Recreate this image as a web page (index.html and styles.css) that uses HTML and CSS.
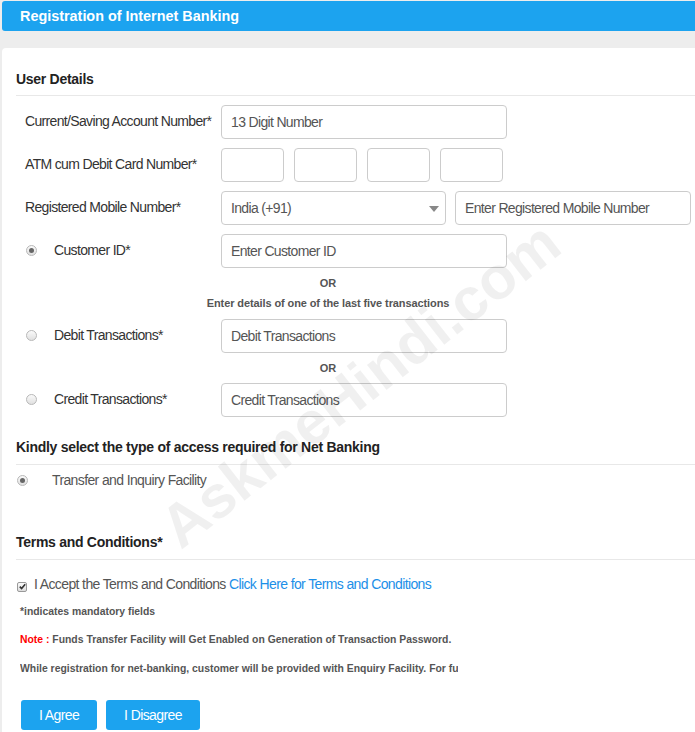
FILE: index.html
```html
<!DOCTYPE html>
<html>
<head>
<meta charset="utf-8">
<title>Registration of Internet Banking</title>
<link rel="stylesheet" href="styles.css">
</head>
<body>
<div class="header">Registration of Internet Banking</div>
<div class="card">
  <div class="section-title">User Details</div>

  <div class="row first">
    <div class="label">Current/Saving Account Number*</div>
    <input class="field wide" type="text" placeholder="13 Digit Number">
  </div>
  <div class="row">
    <div class="label">ATM cum Debit Card Number*</div>
    <div class="atm">
      <input class="field box" type="text">
      <input class="field box" type="text">
      <input class="field box" type="text">
      <input class="field box" type="text">
    </div>
  </div>
  <div class="row">
    <div class="label">Registered Mobile Number*</div>
    <div class="mobile">
      <div class="field select">India (+91)
        <svg class="caret" width="10" height="6" viewBox="0 0 10 6"><path d="M0 0H10L5 6Z" fill="#888"/></svg>
      </div>
      <input class="field phone" type="text" placeholder="Enter Registered Mobile Number">
    </div>
  </div>
  <div class="row">
    <div class="label radio-label"><span class="radio checked"></span>Customer ID*</div>
    <input class="field wide" type="text" placeholder="Enter Customer ID">
  </div>

  <div class="or or-top">OR</div>
  <div class="or hint">Enter details of one of the last five transactions</div>

  <div class="row after-hint">
    <div class="label radio-label"><span class="radio"></span>Debit Transactions*</div>
    <input class="field wide" type="text" placeholder="Debit Transactions">
  </div>

  <div class="or or-mid">OR</div>

  <div class="row after-or">
    <div class="label radio-label"><span class="radio"></span>Credit Transactions*</div>
    <input class="field wide" type="text" placeholder="Credit Transactions">
  </div>

  <div class="section-title access">Kindly select the type of access required for Net Banking</div>
  <div class="facility"><span class="radio checked"></span>Transfer and Inquiry Facility</div>

  <div class="section-title terms">Terms and Conditions*</div>
  <div class="accept"><span class="check"><svg width="7" height="7" viewBox="0 0 7 7"><path d="M0.8 3.6L2.6 5.6L6.2 1.2" fill="none" stroke="#333" stroke-width="1.6"/></svg></span>I Accept the Terms and Conditions <a class="link" href="#">Click Here for Terms and Conditions</a></div>

  <div class="note-text mandatory">*indicates mandatory fields</div>
  <div class="note-text note"><span class="red">Note :</span> Funds Transfer Facility will Get Enabled on Generation of Transaction Password.</div>
  <div class="note-text while">While registration for net-banking, customer will be provided with Enquiry Facility. For further details please contact your branch.</div>

  <div class="buttons">
    <button class="btn agree">I Agree</button>
    <button class="btn disagree">I Disagree</button>
  </div>
</div>
<div class="watermark">AskmeHindi.com</div>
</body>
</html>
```

FILE: styles.css
```css
html, body {
  margin: 0;
  padding: 0;
}
body {
  background: #ededed;
  font-family: "Liberation Sans", Arial, sans-serif;
  color: #333;
  width: 695px;
  height: 732px;
  overflow: hidden;
  position: relative;
}
.header {
  margin: 1px 0 0 2px;
  height: 30px;
  line-height: 30px;
  background: #1ca3ef;
  border-radius: 3px 0 0 3px;
  color: #fff;
  font-weight: bold;
  font-size: 14.4px;
  padding-left: 18px;
}
.card {
  margin: 17px 0 0 2px;
  background: #fff;
  border-radius: 4px 0 0 0;
  height: 700px;
  padding-top: 23px;
  box-sizing: border-box;
}
.section-title {
  margin-left: 14px;
  font-size: 14px;
  font-weight: bold;
  letter-spacing: -0.28px;
  line-height: 16px;
  padding-bottom: 8px;
  border-bottom: 1px solid #e8e8e8;
  color: #222;
}
.row {
  display: grid;
  grid-template-columns: 219px auto;
  align-items: center;
  margin-top: 9px;
  height: 34px;
}
.label {
  padding-left: 23px;
  font-size: 14px;
  letter-spacing: -0.66px;
  color: #333;
  padding-bottom: 2px;
  white-space: nowrap;
}
.radio-label {
  display: flex;
  align-items: center;
  padding-left: 24px;
}
.radio {
  width: 9px;
  height: 9px;
  border-radius: 50%;
  border: 1px solid #b8b8b8;
  background: linear-gradient(#fafafa, #e0e0e0);
  margin-right: 17px;
  position: relative;
  flex: none;
}
.radio.checked::after {
  content: "";
  position: absolute;
  left: 2px;
  top: 2px;
  width: 5px;
  height: 5px;
  border-radius: 50%;
  background: #666;
}
.field {
  box-sizing: border-box;
  height: 34px;
  border: 1px solid #ccc;
  border-radius: 4px;
  background: #fff;
  font-family: "Liberation Sans", Arial, sans-serif;
  font-size: 14px;
  letter-spacing: -0.66px;
  color: #555;
  padding: 0 9px;
  margin: 0;
  outline: none;
}
.field::placeholder { color: #555; }
.wide { width: 286px; }
.atm {
  display: flex;
  gap: 10px;
}
.box { width: 63px; }
.mobile {
  display: flex;
  gap: 9px;
}
.select {
  width: 225px;
  display: flex;
  align-items: center;
  justify-content: space-between;
  padding-right: 6px;
}
.caret { margin-top: 1px; }
.phone { width: 236px; }
.or {
  width: 624px;
  margin-left: 14px;
  text-align: center;
  font-size: 11px;
  font-weight: bold;
  letter-spacing: -0.1px;
  line-height: 14px;
  color: #555;
}
.or-top { margin-top: 8px; }
.hint { margin-top: 6px; }
.after-hint { margin-top: 9px; }
.or-mid { margin-top: 8px; }
.after-or { margin-top: 8px; }
.access { margin-top: 22px; padding-bottom: 9px; }
.facility {
  display: flex;
  align-items: center;
  margin-top: 7px;
  padding-left: 15px;
  font-size: 14px;
  letter-spacing: -0.62px;
  color: #555;
  line-height: 16px;
}
.facility .radio { margin-right: 24px; }
.terms { margin-top: 46px; padding-bottom: 9px; }
.accept {
  margin-top: 16px;
  padding-left: 15px;
  font-size: 14px;
  letter-spacing: -0.62px;
  line-height: 16px;
  height: 16px;
  color: #555;
  white-space: nowrap;
}
.check {
  display: inline-flex;
  vertical-align: -1px;
  box-sizing: border-box;
  width: 10px;
  height: 10px;
  border: 1px solid #999;
  border-radius: 2px;
  background: linear-gradient(#fafafa, #ddd);
  align-items: center;
  justify-content: center;
  margin-right: 7px;
}
.link {
  color: #1c8fe8;
  text-decoration: none;
}
.note-text {
  margin-left: 18px;
  font-size: 10.4px;
  font-weight: bold;
  line-height: 12px;
  color: #555;
  white-space: nowrap;
}
.mandatory { margin-top: 14px; }
.note { margin-top: 16px; }
.while {
  margin-top: 17px;
  width: 438px;
  overflow: hidden;
}
.red { color: #ff0000; }
.buttons {
  display: flex;
  gap: 9px;
  margin: 25px 0 0 19px;
}
.btn {
  height: 30px;
  border: none;
  border-radius: 3px;
  background: #1ca3ef;
  color: #fff;
  font-family: "Liberation Sans", Arial, sans-serif;
  font-size: 14px;
  letter-spacing: -0.6px;
  padding: 0;
}
.agree { width: 76px; }
.disagree { width: 94px; }
.watermark {
  position: absolute;
  left: 110px;
  top: 350px;
  width: 500px;
  text-align: center;
  font-size: 60px;
  font-weight: bold;
  color: rgba(0, 0, 0, 0.06);
  transform: rotate(-38deg);
  pointer-events: none;
  white-space: nowrap;
}
```
